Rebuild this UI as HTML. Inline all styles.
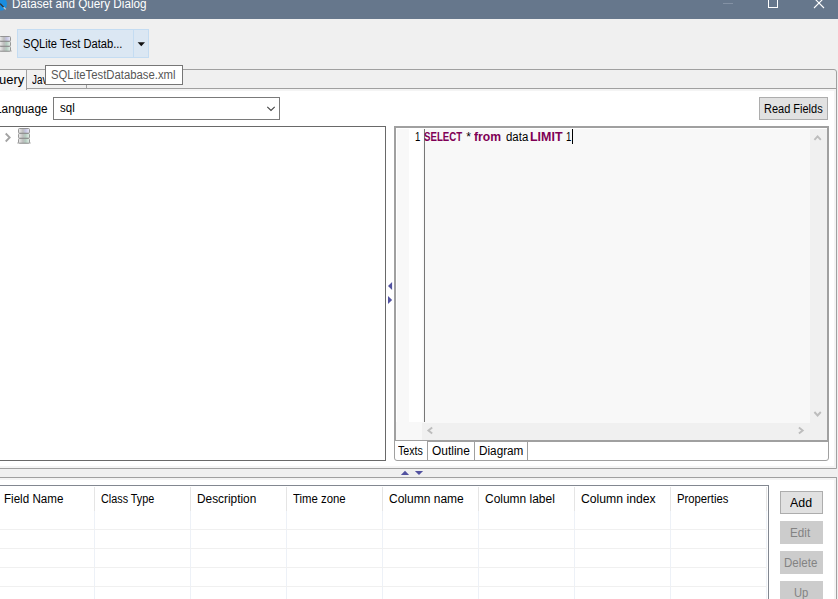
<!DOCTYPE html>
<html><head><meta charset="utf-8">
<style>
*{box-sizing:border-box;margin:0;padding:0}
html,body{width:838px;height:599px;overflow:hidden;background:#f0f0f0}
body{position:relative;font-family:"Liberation Sans",sans-serif;font-size:12px;color:#000}
.a{position:absolute}
.t{position:absolute;white-space:nowrap;line-height:14px;height:14px}
</style></head><body>
<!-- title bar -->
<div class="a" style="left:0;top:0;width:838px;height:19px;background:#66778c"></div>
<svg class="a" style="left:0;top:0" width="12" height="12" viewBox="0 0 12 12"><ellipse cx="1" cy="4" rx="6" ry="6.6" fill="#1a8de0"/><path d="M-1 3.6 L0.8 4.2 L3.8 7.400" stroke="#33302c" stroke-width="1.3" fill="none"/><path d="M3.6 7.2 L5.800 9.4" stroke="#c9c9c9" stroke-width="1.3" fill="none"/></svg>
<div class="t" id="title" style="transform-origin:0 0;transform:scaleX(0.974);left:11.7px;top:-3px;color:#fff">Dataset and Query Dialog</div>
<div class="a" style="left:723px;top:3px;width:10px;height:1px;background:#8391a4"></div>
<div class="a" style="left:768px;top:-3px;width:10px;height:11px;border:1px solid #fff"></div>
<svg class="a" style="left:813px;top:-3px" width="12" height="12" viewBox="0 0 12 12"><path d="M1 1 L11 11 M11 1 L1 11" stroke="#fff" stroke-width="1.1" fill="none"/></svg>

<!-- toolbar -->
<svg class="a" style="left:-3px;top:36px" width="16" height="16" viewBox="0 0 16 16"><defs><linearGradient id="g1" x1="0" x2="1"><stop offset="0" stop-color="#efefef"/><stop offset=".4" stop-color="#bdbdbd"/><stop offset=".65" stop-color="#c4c4e2"/><stop offset="1" stop-color="#ececf6"/></linearGradient>
<linearGradient id="g2" x1="0" x2="1"><stop offset="0" stop-color="#efefef"/><stop offset=".4" stop-color="#bdbdbd"/><stop offset=".65" stop-color="#b4ccc0"/><stop offset="1" stop-color="#e6f0ea"/></linearGradient></defs><rect x="1" y="14.2" width="14" height="1.6" rx=".8" fill="#9a9a9a" opacity=".55"/>
<rect x="2.5" y="0.5" width="11" height="4.7" rx="1" fill="url(#g1)" stroke="#8c8c8c" stroke-width=".9"/>
<rect x="2.500" y="5.5" width="11" height="4.7" rx="1" fill="url(#g2)" stroke="#8c8c8c" stroke-width=".9"/>
<rect x="2.5000" y="10.5" width="11" height="4.7" rx="1" fill="url(#g2)" stroke="#8c8c8c" stroke-width=".9"/>
</svg>
<div class="a" style="left:17px;top:29px;width:132px;height:29px;background:#dbe7f3;border:1px solid #c4dcf2"></div>
<div class="a" style="left:133px;top:29px;width:1px;height:29px;background:#c4dcf2"></div>
<div class="t" id="dbbtn" style="transform-origin:0 0;transform:scaleX(0.928);left:23.2px;top:37px">SQLite Test Datab...</div>
<svg class="a" style="left:137px;top:42px" width="9" height="5" viewBox="0 0 9 5"><path d="M0.6 0.2 L8 0.2 L4.3 4.2 Z" fill="#111"/></svg>

<!-- tab folder -->
<div class="a" style="left:-10px;top:69px;width:847px;height:400px;border:1px solid #a0a0a0;border-radius:0 3px 0 0;background:#f0f0f0"></div>
<div class="a" style="left:-10px;top:88px;width:846px;height:1px;background:#a0a0a0"></div>
<div class="a" style="left:-10px;top:89px;width:846px;height:379px;background:#f4f4f4"></div>
<div class="a" style="left:-10px;top:91px;width:844px;height:375px;background:#fff"></div>
<!-- lower group -->
<div class="a" style="left:-10px;top:477px;width:847px;height:140px;border:1px solid #a0a0a0;background:#f4f4f4"></div>
<div class="a" style="left:-10px;top:480px;width:844px;height:130px;background:#fff"></div>
<!-- tabs -->
<div class="a" style="left:-10px;top:70px;width:37px;height:20px;background:#f4f4f4;border-right:1px solid #a0a0a0"></div>
<div class="a" style="left:86px;top:70px;width:1px;height:18px;background:#a0a0a0"></div>
<div class="t" id="tabq" style="transform-origin:0 0;transform:scaleX(1.08);left:-11px;top:73px">Query</div>
<div class="t" id="tabj" style="transform-origin:0 0;transform:scaleX(0.82);left:32.4px;top:73px">Java</div>
<!-- tooltip -->
<div class="a" style="left:45px;top:65px;width:138px;height:20px;background:#fff;border:1px solid #767676"></div>
<div class="t" id="tip" style="transform-origin:0 0;transform:scaleX(0.943);left:50.7px;top:68px;color:#575757">SQLiteTestDatabase.xml</div>

<!-- language -->
<div class="t" id="lang" style="transform-origin:0 0;transform:scaleX(0.985);left:-5.3px;top:102px">Language</div>
<div class="a" style="left:53px;top:97px;width:227px;height:23px;background:#fff;border:1px solid #7a7a7a"></div>
<div class="t" id="sql" style="transform-origin:0 0;transform:scaleX(0.96);left:59.9px;top:101px">sql</div>
<svg class="a" style="left:265px;top:105px" width="11" height="7" viewBox="0 0 11 7"><path d="M2.3 1.8 L6 5.400 L9.7 1.8" stroke="#444" stroke-width="1.1" fill="none"/></svg>
<!-- read fields -->
<div class="a" style="left:759px;top:97px;width:69px;height:23px;background:#e1e1e1;border:1px solid #adadad"></div>
<div class="t" id="rf" style="transform-origin:0 0;transform:scaleX(0.916);left:764.2px;top:102px">Read Fields</div>

<!-- tree -->
<div class="a" style="left:-10px;top:126px;width:396px;height:335px;background:#fff;border:1px solid #696969"></div>
<svg class="a" style="left:4px;top:132px" width="8" height="11" viewBox="0 0 8 11"><path d="M1.7 1.5 L5.7 5.5 L1.7 9.500" stroke="#a3a3a3" stroke-width="1.8" fill="none"/></svg>
<svg class="a" style="left:16px;top:128px" width="16" height="16" viewBox="0 0 16 16"><rect x="1" y="14.2" width="14" height="1.6" rx=".8" fill="#9a9a9a" opacity=".55"/>
<rect x="2.5" y="0.5" width="11" height="4.7" rx="1" fill="url(#g1)" stroke="#8c8c8c" stroke-width=".9"/>
<rect x="2.500" y="5.5" width="11" height="4.7" rx="1" fill="url(#g2)" stroke="#8c8c8c" stroke-width=".9"/>
<rect x="2.5000" y="10.5" width="11" height="4.7" rx="1" fill="url(#g2)" stroke="#8c8c8c" stroke-width=".9"/>
</svg>
<!-- sash arrows -->
<svg class="a" style="left:387px;top:281px" width="6" height="24" viewBox="0 0 6 24"><path d="M5.1 1 L5.1 9 L1 5 Z M1 15 L1 23 L5.1 19 Z" fill="#5252a0"/></svg>

<!-- editor container -->
<div class="a" style="left:394px;top:126px;width:435px;height:335px;border:1px solid #a0a0a0;border-radius:0 0 3px 3px;background:#fff"></div>
<div class="a" style="left:394px;top:126px;width:435px;height:316px;border:2px solid #a0a0a0;border-right-color:#a0a0a0;background:#f0f0f0"></div>
<div class="a" style="left:396px;top:128px;width:414px;height:295px;background:#f8f8f8"></div>
<div class="a" style="left:409px;top:128px;width:13px;height:294px;background:#fff"></div><div class="a" style="left:422px;top:128px;width:1px;height:294px;background:#fcfcfc"></div>
<div class="a" style="left:396px;top:128px;width:431px;height:1px;background:#fff"></div><div class="a" style="left:396px;top:128px;width:1px;height:312px;background:#fff"></div>
<div class="a" style="left:424px;top:129px;width:1px;height:293px;background:#777"></div>
<div class="a" style="left:396px;top:422px;width:26px;height:18px;background:#f8f8f8"></div>
<div class="t" id="ln" style="transform-origin:0 0;transform:scaleX(0.8);left:415.3px;top:130px">1</div>
<div class="t" id="c1" style="transform-origin:0 0;transform:scaleX(0.806);left:424.3px;top:130px;color:#7f0055;font-weight:bold">SELECT</div>
<div class="t" id="c2" style="left:466.3px;top:130px">*</div>
<div class="t" id="c3" style="transform-origin:0 0;transform:scaleX(1.016);left:474.2px;top:130px;color:#7f0055;font-weight:bold">from</div>
<div class="t" id="c4" style="transform-origin:0 0;transform:scaleX(0.954);left:505.7px;top:130px">data</div>
<div class="t" id="c5" style="transform-origin:0 0;transform:scaleX(1.038);left:530.2px;top:130px;color:#7f0055;font-weight:bold">LIMIT</div>
<div class="t" id="c6" style="transform-origin:0 0;transform:scaleX(0.8);left:566.2px;top:130px">1</div>
<div class="a" style="left:572px;top:129px;width:1px;height:15px;background:#000"></div>
<!-- scroll arrows -->
<svg class="a" style="left:0;top:0;pointer-events:none" width="838" height="599" viewBox="0 0 838 599"><g stroke="#bdbdbd" stroke-width="1.9" fill="none">
<path d="M814.4 139.8 L817.6 136.400 L820.8 139.8"/>
<path d="M814.4 412 L817.6 415.5 L820.8 412"/>
<path d="M432.2 427.4 L428.4 430.4 L432.2 433.4"/>
<path d="M798.9 427.4 L802.700 430.4 L798.9 433.4"/>
</g></svg>
<!-- bottom tabs -->
<div class="a" style="left:427px;top:442px;width:1px;height:18px;background:#a0a0a0"></div>
<div class="a" style="left:474px;top:442px;width:1px;height:18px;background:#a0a0a0"></div>
<div class="a" style="left:527px;top:442px;width:1px;height:18px;background:#a0a0a0"></div>
<div class="a" style="left:395px;top:441px;width:32px;height:1px;background:#fff"></div>
<div class="t" id="bt1" style="transform-origin:0 0;transform:scaleX(0.89);left:398.3px;top:444px">Texts</div>
<div class="t" id="bt2" style="transform-origin:0 0;transform:scaleX(0.995);left:432.2px;top:444px">Outline</div>
<div class="t" id="bt3" style="transform-origin:0 0;transform:scaleX(0.979);left:479.2px;top:444px">Diagram</div>

<!-- horizontal sash -->
<svg class="a" style="left:400px;top:470px" width="24" height="6" viewBox="0 0 24 6"><path d="M0.9 5 L9.1 5 L5 0.8 Z M14.9 0.9 L23.100 0.9 L19 5.1 Z" fill="#5252a0"/></svg>

<!-- table -->
<div class="a" style="left:-10px;top:485px;width:779px;height:130px;background:#fff;border:1px solid #828790"></div>
<div class="a" style="left:94px;top:487px;width:1px;height:24px;background:#e5e5e5"></div>
<div class="a" style="left:94px;top:511px;width:1px;height:88px;background:#edf1f7"></div>
<div class="a" style="left:190px;top:487px;width:1px;height:24px;background:#e5e5e5"></div>
<div class="a" style="left:190px;top:511px;width:1px;height:88px;background:#edf1f7"></div>
<div class="a" style="left:286px;top:487px;width:1px;height:24px;background:#e5e5e5"></div>
<div class="a" style="left:286px;top:511px;width:1px;height:88px;background:#edf1f7"></div>
<div class="a" style="left:382px;top:487px;width:1px;height:24px;background:#e5e5e5"></div>
<div class="a" style="left:382px;top:511px;width:1px;height:88px;background:#edf1f7"></div>
<div class="a" style="left:478px;top:487px;width:1px;height:24px;background:#e5e5e5"></div>
<div class="a" style="left:478px;top:511px;width:1px;height:88px;background:#edf1f7"></div>
<div class="a" style="left:574px;top:487px;width:1px;height:24px;background:#e5e5e5"></div>
<div class="a" style="left:574px;top:511px;width:1px;height:88px;background:#edf1f7"></div>
<div class="a" style="left:670px;top:487px;width:1px;height:24px;background:#e5e5e5"></div>
<div class="a" style="left:670px;top:511px;width:1px;height:88px;background:#edf1f7"></div>
<div class="a" style="left:766px;top:487px;width:1px;height:24px;background:#e5e5e5"></div>
<div class="a" style="left:766px;top:511px;width:1px;height:88px;background:#edf1f7"></div>
<div class="a" style="left:0;top:529px;width:767px;height:1px;background:#f0f0f0"></div>
<div class="a" style="left:0;top:548px;width:767px;height:1px;background:#f0f0f0"></div>
<div class="a" style="left:0;top:567px;width:767px;height:1px;background:#f0f0f0"></div>
<div class="a" style="left:0;top:586px;width:767px;height:1px;background:#f0f0f0"></div>
<div class="t" style="transform-origin:0 0;transform:scaleX(0.967);left:4.2px;top:492px" id="h1">Field Name</div>
<div class="t" style="transform-origin:0 0;transform:scaleX(0.901);left:100.9px;top:492px" id="h2">Class Type</div>
<div class="t" style="transform-origin:0 0;transform:scaleX(0.987);left:197.2px;top:492px" id="h3">Description</div>
<div class="t" style="transform-origin:0 0;transform:scaleX(0.946);left:293.0px;top:492px" id="h4">Time zone</div>
<div class="t" style="transform-origin:0 0;transform:scaleX(1.001);left:389.2px;top:492px" id="h5">Column name</div>
<div class="t" style="transform-origin:0 0;transform:scaleX(0.997);left:485.0px;top:492px" id="h6">Column label</div>
<div class="t" style="transform-origin:0 0;transform:scaleX(1.018);left:580.9px;top:492px" id="h7">Column index</div>
<div class="t" style="transform-origin:0 0;transform:scaleX(0.939);left:677.2px;top:492px" id="h8">Properties</div>

<!-- buttons -->
<div class="a" style="left:780px;top:491px;width:43px;height:23px;background:#e1e1e1;border:1px solid #adadad"></div>
<div class="t" id="b1" style="transform-origin:0 0;transform:scaleX(1.032);left:789.8px;top:496px">Add</div>
<div class="a" style="left:780px;top:521px;width:43px;height:23px;background:#cccccc"></div>
<div class="t" id="b2" style="transform-origin:0 0;transform:scaleX(0.973);left:790.4px;top:526px;color:#838383">Edit</div>
<div class="a" style="left:780px;top:551px;width:43px;height:23px;background:#cccccc"></div>
<div class="t" id="b3" style="transform-origin:0 0;transform:scaleX(0.960);left:784.4px;top:556px;color:#838383">Delete</div>
<div class="a" style="left:780px;top:581px;width:43px;height:23px;background:#cccccc"></div>
<div class="t" id="b4" style="transform-origin:0 0;transform:scaleX(0.936);left:793.7px;top:586px;color:#838383">Up</div>
</body></html>
